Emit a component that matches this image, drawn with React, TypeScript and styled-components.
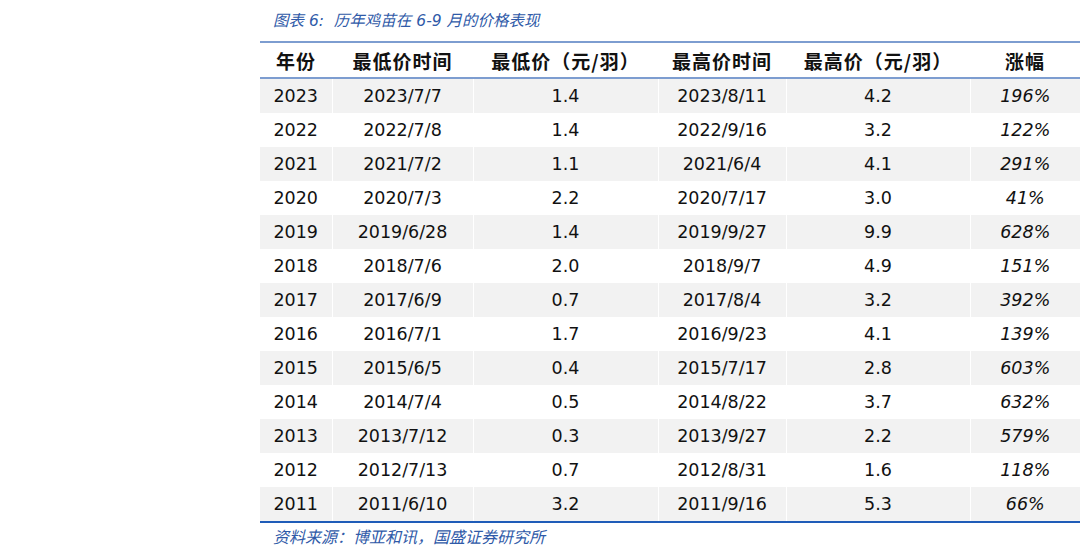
import React from "react";
import styled, { createGlobalStyle } from "styled-components";

const Global = createGlobalStyle`
  html, body { margin: 0; padding: 0; background: #ffffff; }
  body { font-family: "DejaVu Sans", "Noto Sans CJK SC", sans-serif; }
`;

const Page = styled.div`
  width: 1085px;
  height: 560px;
  padding-left: 260px;
  box-sizing: border-box;
  overflow: hidden;
`;

const Figure = styled.div`
  width: 820px;
  display: flex;
  flex-direction: column;
`;

const Caption = styled.div<{ $top?: boolean }>`
  height: ${(p) => (p.$top ? "41px" : "auto")};
  padding-left: 13px;
  padding-top: ${(p) => (p.$top ? "12px" : "5px")};
  box-sizing: border-box;
  font-family: "DejaVu Sans", "Noto Sans CJK SC", sans-serif;
  font-style: italic;
  font-size: ${(p) => (p.$top ? "15.5px" : "16px")};
  line-height: 19px;
  color: #2f5aa8;
  white-space: nowrap;
`;

const Table = styled.table`
  width: 820px;
  border-collapse: collapse;
  table-layout: fixed;
  border-top: 2px solid #7d9dd0;
  border-bottom: 2px solid #1f5cb8;
`;

const HeadCell = styled.th`
  height: 34px;
  padding: 0;
  font-family: "Noto Sans CJK SC", sans-serif;
  font-weight: 700;
  font-size: 19px;
  letter-spacing: 1px;
  color: #111;
  text-align: center;
  vertical-align: middle;
  border-bottom: 2px solid #7d9dd0;
`;

const Row = styled.tr<{ $shade: boolean }>`
  background: ${(p) => (p.$shade ? "#f2f2f2" : "#ffffff")};
`;

const Cell = styled.td<{ $italic?: boolean }>`
  height: 34px;
  padding: 0;
  font-family: "DejaVu Sans", sans-serif;
  font-size: 17.5px;
  font-style: ${(p) => (p.$italic ? "italic" : "normal")};
  color: #111;
  text-align: center;
  vertical-align: middle;
  border-right: 1px solid #ffffff;
  &:last-child { border-right: none; }
`;

const widths = [72, 141, 185, 128, 184, 110];
const heads = ["年份", "最低价时间", "最低价（元/羽）", "最高价时间", "最高价（元/羽）", "涨幅"];

const data: string[][] = [
  ["2023", "2023/7/7", "1.4", "2023/8/11", "4.2", "196%"],
  ["2022", "2022/7/8", "1.4", "2022/9/16", "3.2", "122%"],
  ["2021", "2021/7/2", "1.1", "2021/6/4", "4.1", "291%"],
  ["2020", "2020/7/3", "2.2", "2020/7/17", "3.0", "41%"],
  ["2019", "2019/6/28", "1.4", "2019/9/27", "9.9", "628%"],
  ["2018", "2018/7/6", "2.0", "2018/9/7", "4.9", "151%"],
  ["2017", "2017/6/9", "0.7", "2017/8/4", "3.2", "392%"],
  ["2016", "2016/7/1", "1.7", "2016/9/23", "4.1", "139%"],
  ["2015", "2015/6/5", "0.4", "2015/7/17", "2.8", "603%"],
  ["2014", "2014/7/4", "0.5", "2014/8/22", "3.7", "632%"],
  ["2013", "2013/7/12", "0.3", "2013/9/27", "2.2", "579%"],
  ["2012", "2012/7/13", "0.7", "2012/8/31", "1.6", "118%"],
  ["2011", "2011/6/10", "3.2", "2011/9/16", "5.3", "66%"],
];

export default function App() {
  return (
    <>
      <Global />
      <Page>
        <Figure>
          <Caption $top>图表 6:&nbsp; 历年鸡苗在 6-9 月的价格表现</Caption>
          <Table>
            <colgroup>
              {widths.map((w, i) => (
                <col key={i} style={{ width: w }} />
              ))}
            </colgroup>
            <thead>
              <tr>
                {heads.map((h) => (
                  <HeadCell key={h}>{h}</HeadCell>
                ))}
              </tr>
            </thead>
            <tbody>
              {data.map((r, i) => (
                <Row key={r[0]} $shade={i % 2 === 0}>
                  {r.map((c, j) => (
                    <Cell key={j} $italic={j === 5}>
                      {c}
                    </Cell>
                  ))}
                </Row>
              ))}
            </tbody>
          </Table>
          <Caption>资料来源：博亚和讯，国盛证券研究所</Caption>
        </Figure>
      </Page>
    </>
  );
}
